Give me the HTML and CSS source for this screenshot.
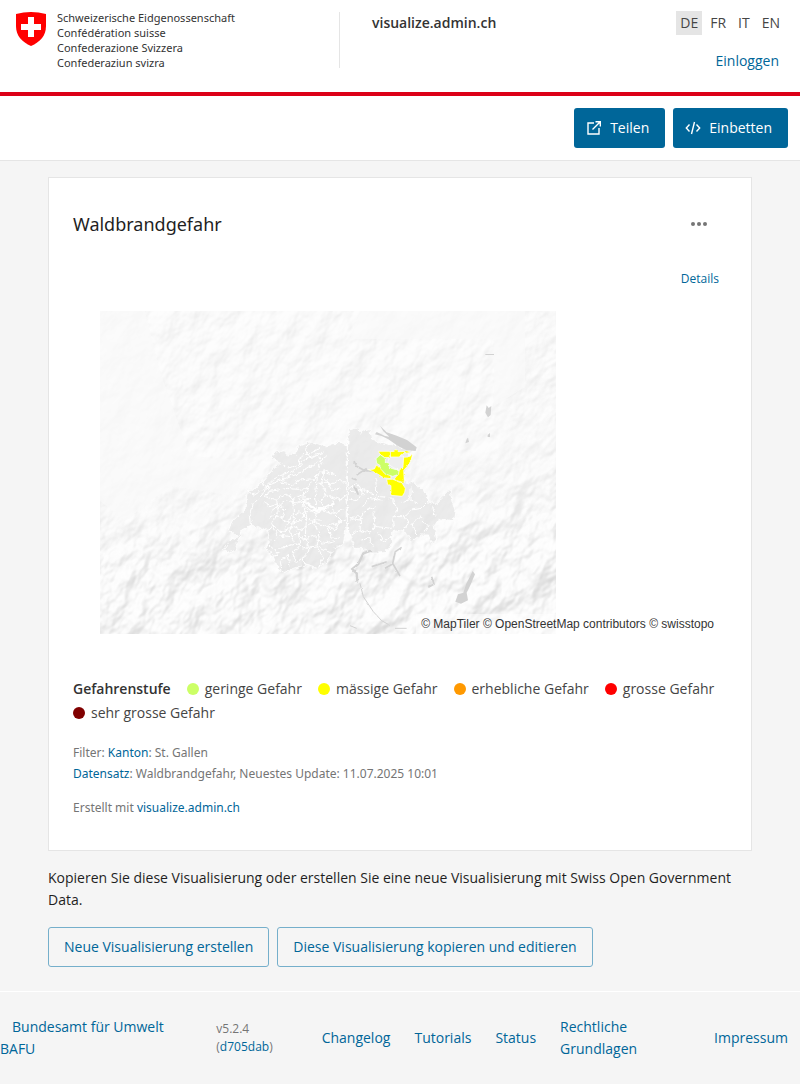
FILE: index.html
```html
<!DOCTYPE html>
<html lang="de">
<head>
<meta charset="utf-8">
<meta name="viewport" content="width=device-width, initial-scale=1">
<title>Waldbrandgefahr - visualize.admin.ch</title>
<link rel="stylesheet" href="styles.css">
</head>
<body>
<header class="header">
  <a class="brand" href="#">
    <svg class="shield" viewBox="0 0 30 34" aria-hidden="true"><path fill="#f00" d="M0 2Q15-2 30 2V14C30 24 24 30 15 34C6 30 0 24 0 14Z"/><path fill="#fff" d="M12 5h6v7h7v6h-7v7h-6v-7H5v-6h7z"/></svg>
    <span class="brand-text"><span>Schweizerische Eidgenossenschaft</span><span>Confédération suisse</span><span>Confederazione Svizzera</span><span>Confederaziun svizra</span></span>
  </a>
  <strong class="site-name">visualize.admin.ch</strong>
  <div class="header-side">
    <nav class="languages" aria-label="Sprache"><a class="active" href="#">DE</a><a href="#">FR</a><a href="#">IT</a><a href="#">EN</a></nav>
    <a class="login" href="#">Einloggen</a>
  </div>
</header>
<div class="actions">
  <button class="btn primary" type="button"><svg viewBox="0 0 16 16" width="16" height="16" fill="none" stroke="currentColor" stroke-width="1.4" aria-hidden="true"><path d="M8 3H2v11h11V8M9.500 1.700H14.300V6.500M14 2L6.500 9.500"/></svg>Teilen</button>
  <button class="btn primary" type="button"><svg viewBox="0 0 16 16" width="16" height="16" fill="none" stroke="currentColor" stroke-width="1.400" aria-hidden="true"><path d="M4.500 4.500L1.300 8L4.500 11.500M11.500 4.500L14.700 8L11.500 11.500M9.500 2L6.500 14"/></svg>Einbetten</button>
</div>
<main class="main">
  <article class="card">
    <div class="card-head">
      <h1>Waldbrandgefahr</h1>
      <button class="more" type="button" aria-label="Mehr"><svg viewBox="0 0 16 4" width="16" height="4" fill="#757575"><circle cx="2" cy="2" r="2"/><circle cx="8" cy="2" r="2"/><circle cx="14" cy="2" r="2"/></svg></button>
    </div>
    <a class="details" href="#">Details</a>
    <div class="map">
      <svg class="map-canvas" viewBox="0 0 456 323" role="img" aria-label="Karte der Waldbrandgefahr">
        <defs>
          <filter id="hills" x="-20%" y="-30%" width="140%" height="160%" color-interpolation-filters="sRGB">
            <feTurbulence type="fractalNoise" baseFrequency=".034 .022" numOctaves="4" seed="12"/>
            <feDiffuseLighting surfaceScale="13" diffuseConstant="1" lighting-color="#fff"><feDistantLight azimuth="200" elevation="60"/></feDiffuseLighting>
            <feColorMatrix values=".15 0 0 0 .846  .15 0 0 0 .846  .15 0 0 0 .846  0 0 0 0 1"/>
          </filter>
          <filter id="plains" x="-20%" y="-30%" width="140%" height="160%" color-interpolation-filters="sRGB">
            <feTurbulence type="fractalNoise" baseFrequency=".042 .030" numOctaves="4" seed="4"/>
            <feDiffuseLighting surfaceScale="5" diffuseConstant="1" lighting-color="#fff"><feDistantLight azimuth="200" elevation="60"/></feDiffuseLighting>
            <feColorMatrix values=".11 0 0 0 .884  .11 0 0 0 .884  .11 0 0 0 .884  0 0 0 0 1"/>
          </filter>
          <filter id="rough" x="-5%" y="-5%" width="110%" height="110%">
            <feTurbulence type="fractalNoise" baseFrequency=".07" numOctaves="3" seed="5"/>
            <feDisplacementMap in="SourceGraphic" scale="16" xChannelSelector="R" yChannelSelector="G"/>
          </filter>
          <filter id="ragged" x="-5%" y="-5%" width="110%" height="110%">
            <feTurbulence type="fractalNoise" baseFrequency=".12" numOctaves="2" seed="8"/>
            <feDisplacementMap in="SourceGraphic" scale="7" xChannelSelector="R" yChannelSelector="G"/>
          </filter>
          <linearGradient id="south" x1=".4" y1="0" x2=".5" y2="1"><stop offset=".45" stop-color="#000"/><stop offset=".78" stop-color="#fff"/></linearGradient>
          <linearGradient id="east" x1="0" x2="1" y1="0" y2="0"><stop offset=".85" stop-color="#fff" stop-opacity="0"/><stop offset="1" stop-color="#fff"/></linearGradient>
          <mask id="alps"><path fill="url(#south)" d="M0 0H456V323H0z"/><path fill="url(#east)" opacity=".5" d="M0 0H456V323H0z"/></mask>
        </defs>
        <path fill="#fafafa" d="M0 0H456V323H0z"/>
        <g filter="url(#plains)" transform="rotate(35 228 161)"><path d="M-60-160H516V480H-60z"/></g>
        <g mask="url(#alps)"><g filter="url(#hills)" transform="rotate(35 228 161)"><path d="M-60-160H516V480H-60z"/></g></g>
        <path fill="#fafafa" opacity=".7" d="M260 0H425V76L394 95V28H250zM0 0H45L60 60L90 145L150 150L135 185L70 175L25 210L0 190z"/>
        <g transform="translate(110 109) scale(.33333)">
          <g filter="url(#rough)">
            <path fill="#e6e6e6" fill-opacity=".75" stroke="#fff" stroke-width="2.500" d="M40 391L60 362L82 350L74 340L55 332L65 305L105 270L112 212L130 210L153 190L190 147L215 131L183 112L190 98L220 92L232 105L255 102L265 80L300 66L340 80L388 66L414 76L415 30L440 24L454 36L480 28L485 60L520 68L605 90L590 120L580 180L592 190L612 185L630 205L650 220L650 240L680 250L720 205L726 245L735 270L730 302L690 297L672 310L680 365L665 370L655 345L630 345L605 365L580 330L545 335L545 375L520 398L480 400L460 385L435 385L420 345L410 320L400 370L370 390L350 425L320 445L285 435L250 445L222 458L200 437L185 402L166 385L180 360L174 335L125 315L95 330L75 390L55 397z"/>
            <g fill="none" stroke="#fff" stroke-width="3" stroke-linejoin="round">
              <path d="M112 212L130 225L160 208L190 178L220 163L260 150L276 125L300 110L345 96"/>
              <path d="M125 315L120 280L130 252L156 225L175 195L207 182L240 168L278 155L330 122L350 105"/>
              <path d="M215 131L235 145L265 132L275 105L305 100L330 85M220 160L215 190L245 194L270 180L310 176L336 152L378 164M153 190L180 205L166 230L195 240L225 222L248 238L285 220L300 190L323 166"/>
              <path d="M300 70L286 88L300 112L326 109L335 130L320 155M326 190L370 190L390 175L410 195M343 145L335 190L350 220L330 245L344 270L315 278L285 260L270 235L285 220"/>
              <path d="M160 245L180 260L207 250L225 270L215 295L238 312L275 300L285 276L325 270L370 280L415 260M174 295L195 285L216 295M166 330L192 318L210 335L250 322L270 330L310 305L350 320L408 300"/>
              <path d="M238 220L253 255L253 300L240 330L255 370M200 240L205 280L185 310L203 350L177 375L205 400L180 410M283 220L280 260L290 285L286 350L300 390L278 410L286 437M322 170L316 230L322 270L310 310L330 340L320 380L340 410L327 440"/>
              <path d="M210 345L238 350L265 340L280 360L310 345L340 372L375 365M205 385L230 382L255 372L290 385L325 380L365 400M217 455L210 422L235 405L240 440M245 405L260 430L290 405M370 280L365 235L340 220L390 240L410 225M370 280L390 300L378 330L350 320L365 350L390 355"/>
              <path d="M175 215L205 210L232 205L262 208L300 205M185 275L230 240L265 250L300 235M225 325L245 290L270 275L300 300L330 300M345 175L365 210L388 205M265 335L270 375L245 405"/>
              <path d="M412 60V340M415 210L438 190L460 220L445 240L418 235M419 295L450 300L462 275L497 260M497 175L500 220L492 245L512 230L550 235L560 270L548 300L550 325"/>
              <path d="M452 300L450 330L425 345M450 330L480 340L495 320L545 325M492 275L495 325M575 250L595 240L610 210M548 290L585 290L605 270L635 265L655 245L668 260L675 290M585 290L595 310L580 330M605 315L630 290L655 318L640 340M600 205L600 240L625 250"/>
              <path d="M420 215L465 210L490 225M458 260L475 235L515 240M506 340L520 365L545 350M454 360L475 350L490 380M425 300L440 285L455 300M610 315L620 345"/>
            </g>
            <path fill="none" stroke="#fff" stroke-width="7" d="M285 245L315 270L345 265L370 250"/>
          </g>
          <path fill="#d2d2d2" d="M510 17L530 37L560 47L591 60L620 82L617 93L590 91L565 79L535 58L515 48L495 43L500 36L525 48L538 50L520 34z"/>
          <g filter="url(#ragged)" fill="none" stroke="#d2d2d2" stroke-width="5"><path d="M432 123L440 139L465 152L500 155M470 145L440 165M425 175L440 180M432 200L445 224L438 205"/><path stroke-width="7" d="M483 392L460 400L445 432L427 447L440 460L442 485"/><path d="M575 382L556 395L548 430L570 468M552 410L548 432L525 445M485 440L510 432L530 425M665 470L672 492L655 502"/><path stroke-width="3" d="M450 490L460 530L490 575L515 602L540 616M420 617L440 625M555 625H590"/></g>
          <path fill="#d2d2d2" d="M788 453L795 463L780 498L770 518L774 541L753 551L736 545L744 523L760 518L768 493L783 463zM830-44L836-36L844-42L842-15L834-8L826-22zM770 58L774 53L777 66L766 70zM833 45l7-6v12h-7zM826-198h26v3h-26z"/>
          <g filter="url(#ragged)" stroke="#fff" stroke-width="2">
            <path fill="#eee" d="M538 112L548 107L580 108L583 140L568 151L550 143L532 130z"/>
            <path fill="#ff0" d="M505 94L537 94L541 112L524 113L510 103zM541 95L553 94L557 87L565 95L600 94L598 98L576 101L568 111L541 111zM581 112L595 111L607 105L603 122L592 139L581 151L583 186L568 187L552 178L563 164L568 150L579 142zM475 149L493 147L499 136L515 144L522 158L542 166L543 176L520 173L503 162L488 154zM530 178L548 178L574 186L586 205L584 217L577 229L543 226V197L533 194z"/>
            <path fill="#cf6" d="M498 116L511 104L526 115L526 126L538 130L538 143L567 152L566 163L548 169L526 162L513 148L510 136L500 130z"/>
          </g>
        </g>
      </svg>
      <small class="attribution">© MapTiler © OpenStreetMap contributors © swisstopo</small>
    </div>
    <div class="legend">
      <strong>Gefahrenstufe</strong>
      <span class="item low">geringe Gefahr</span>
      <span class="item moderate">mässige Gefahr</span>
      <span class="item considerable">erhebliche Gefahr</span>
      <span class="item high">grosse Gefahr</span>
      <span class="item extreme">sehr grosse Gefahr</span>
    </div>
    <div class="meta">
      <p>Filter: <a href="#">Kanton</a>: St. Gallen</p>
      <p><a href="#">Datensatz</a>: Waldbrandgefahr, Neuestes Update: 11.07.2025 10:01</p>
      <p class="created">Erstellt mit <a href="#">visualize.admin.ch</a></p>
    </div>
  </article>
  <p class="intro">Kopieren Sie diese Visualisierung oder erstellen Sie eine neue Visualisierung mit Swiss Open Government Data.</p>
  <div class="links"><a class="btn outline" href="#">Neue Visualisierung erstellen</a><a class="btn outline" href="#">Diese Visualisierung kopieren und editieren</a></div>
</main>
<footer class="footer">
  <div class="office"><a href="#">Bundesamt für Umwelt BAFU</a></div>
  <div class="version"><span>v5.2.4</span><span>(<a href="#">d705dab</a>)</span></div>
  <nav class="footer-nav"><a href="#">Changelog</a><a href="#">Tutorials</a><a href="#">Status</a><a class="legal" href="#">Rechtliche Grundlagen</a><a href="#">Impressum</a></nav>
</footer>
</body>
</html>
```
FILE: styles.css
```css
* { box-sizing: border-box; }
body { margin: 0; background: #f5f5f5; color: #1f1f1f; font: 14px/22px "Open Sans", "Noto Sans", sans-serif; }
a { color: #069; text-decoration: none; }
p, h1 { margin: 0; }
button { font: inherit; cursor: pointer; }
.header { display: grid; grid-template-columns: 340px 1fr auto; align-items: start; min-height: 96px; padding: 12px 16px 0 0; background: #fff; border-bottom: 4px solid #dc0018; }
.brand { display: flex; gap: 11px; height: 56px; padding-left: 16px; border-right: 1px solid #e5e5e5; color: #333; font-size: 11px; line-height: 15px; }
.shield { flex: none; width: 30px; height: 34px; }
.brand-text { display: grid; align-content: start; grid-auto-rows: 15px; margin-top: -2px; font-family: "Noto Sans", sans-serif; white-space: nowrap; }
.site-name { padding-left: 32px; color: #333; font-weight: 600; }
.header-side { display: grid; justify-items: end; gap: 14px; margin-top: -1px; }
.languages { display: flex; gap: 4px; }
.languages a { padding: 0 4px; color: #454545; line-height: 24px; }
.languages .active { background: #e5e5e5; }
.login { padding-right: 5px; line-height: 24px; }
.actions { display: flex; justify-content: flex-end; gap: 8px; padding: 12px; background: #fff; border-bottom: 1px solid #e5e5e5; }
.btn { display: inline-flex; align-items: center; height: 40px; border-radius: 3px; padding: 0 15px; }
.primary { gap: 8px; padding: 0 16px 0 12px; border: 0; color: #fff; background: #069; }
.outline { border: 1px solid #75afcb; }
.main { padding: 16px 48px 24px; }
.card { padding: 24px 24px 32px; background: #fff; border: 1px solid #e5e5e5; }
.card-head { display: flex; justify-content: space-between; align-items: center; height: 44px; padding-right: 12px; }
h1 { font: 400 18px/24px "Noto Sans", sans-serif; }
.more { display: grid; place-items: center; width: 32px; height: 32px; padding: 0; border: 0; background: none; }
.details { display: block; width: max-content; margin: 22px 8px 21px auto; font-size: 12px; }
.map { position: relative; padding-left: 27px; margin-bottom: 43px; }
.map-canvas { display: block; width: 100%; max-width: 456px; aspect-ratio: 456 / 323; }
.attribution { position: absolute; right: 8px; bottom: 0; padding: 0 5px; background: rgba(255,255,255,.5); color: #333; font: 12px/20px "Liberation Sans", Arial, sans-serif; }
.legend { display: flex; flex-wrap: wrap; column-gap: 16px; line-height: 24px; color: #454545; }
.legend strong { color: #333; font-weight: 600; }
.item { display: inline-flex; align-items: center; gap: 6px; }
.item::before { content: ""; width: 12px; height: 12px; border-radius: 50%; background: currentColor; }
.low::before { background: #cf6; }
.moderate::before { background: #ff0; }
.considerable::before { background: #f90; }
.high::before { background: #f00; }
.extreme::before { background: #800000; }
.meta { margin-top: 17px; color: #757575; font: 12px/21px "Noto Sans", sans-serif; }
.created { margin-top: 13px; }
.intro { margin: 16px 0; }
.links { display: flex; flex-wrap: wrap; gap: 8px; }
.footer { display: flex; align-items: center; justify-content: space-between; padding: 24px 12px 24px 0; border-top: 1px solid #fff; }
.office { width: 193px; padding-right: 20px; text-indent: 12px; }
.version { display: grid; width: 82px; color: #757575; font-size: 12px; line-height: 18px; }
.footer-nav { display: flex; align-items: center; gap: 24px; }
.legal { width: 130px; }
```
